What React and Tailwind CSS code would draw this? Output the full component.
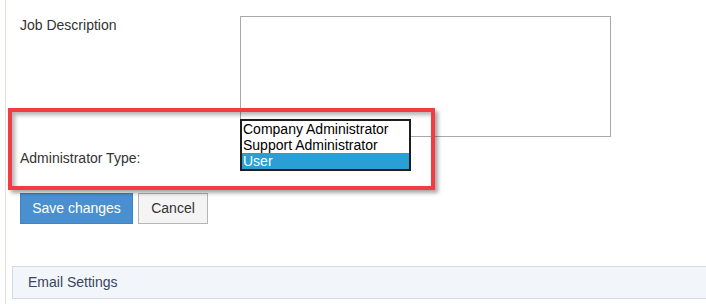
import React from "react";

export default function App() {
  return (
    <div className="relative h-[304px] w-[706px] overflow-hidden bg-white font-['Liberation_Sans',Arial,sans-serif] text-[14px] text-[#333]">
      <div className="ml-[5px] h-full border-l border-[#e4e2d8] pl-[14px] pt-[16px]">
        <div className="flex">
          <div className="w-[220px] leading-[18px]">Job Description</div>
          <div className="h-[121px] w-[371px] border border-[#a9a9a9] bg-white" />
        </div>
        <div className="relative z-10 -mt-[18px] flex items-start">
          <div className="w-[220px] pt-[30px] leading-[18px]">Administrator Type:</div>
          <div className="w-[171px] border-2 border-[#1e1e1e] bg-white text-[14px] leading-[16px] text-black">
            <div className="pl-[1px]">Company Administrator</div>
            <div className="pl-[1px]">Support Administrator</div>
            <div className="bg-[#299fd6] pl-[1px] text-white">User</div>
          </div>
        </div>
        <div className="mt-[22px] flex gap-[5px]">
          <button className="h-[31px] w-[113px] border border-[#3f83c4] bg-[#4a90d0] text-[14px] text-white">
            Save changes
          </button>
          <button className="h-[31px] w-[70px] border border-[#b5b5b5] bg-[#f4f4f4] text-[14px] text-[#333]">
            Cancel
          </button>
        </div>
        <div className="-ml-[8px] mt-[42px] flex h-[33px] w-[720px] items-center border border-[#d3dae3] bg-[#f2f6fa] pl-[15px] text-[14px] text-[#3a4462]">
          Email Settings
        </div>
      </div>
      <div className="pointer-events-none absolute left-[8px] top-[108px] z-20 h-[82px] w-[427px] border-4 border-[#f23c43] shadow-[3px_3px_4px_rgba(0,0,0,0.35),inset_3px_3px_4px_rgba(0,0,0,0.3)]" />
    </div>
  );
}
